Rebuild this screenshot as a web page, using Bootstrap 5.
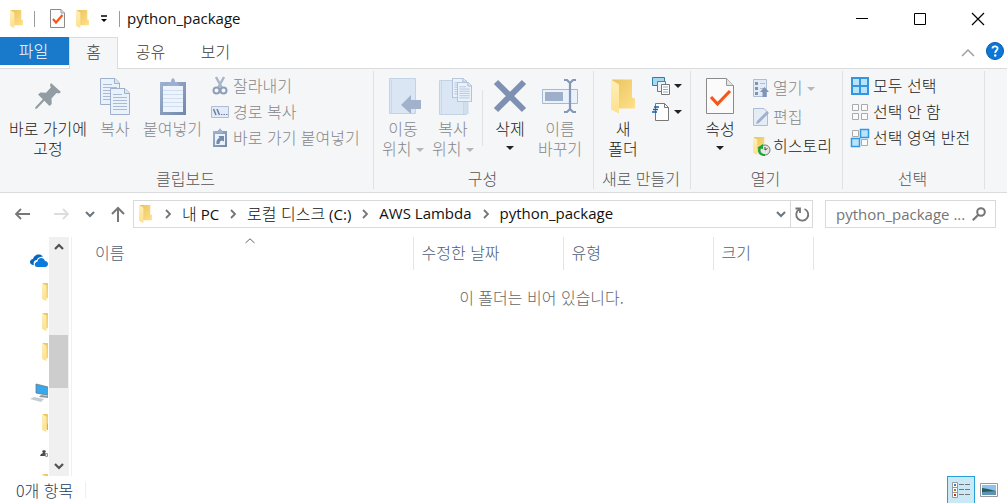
<!DOCTYPE html>
<html lang="ko">
<head>
<meta charset="utf-8">
<meta name="viewport" content="width=device-width, initial-scale=1">
<title>python_package</title>
<link href="https://cdn.jsdelivr.net/npm/bootstrap@5.3.0/dist/css/bootstrap.min.css" rel="stylesheet">
<style>
  body { font: 300 16px/20px "Noto Sans CJK KR", sans-serif; color: #222; background: #fff; }
  button, input { font: inherit; color: inherit; }
  button { background: none; border: 0; padding: 0; }
  a { color: inherit; text-decoration: none; }
  svg { display: block; flex: none; overflow: visible; }
  .latin { font-family: "Open Sans", "Noto Sans CJK KR", sans-serif; font-size: 15px; font-weight: 400; }
  .hangul { font: 300 16px/20px "Noto Sans CJK KR", sans-serif; }
  .title-row { height: 37px; padding-left: 10px; gap: 11px; color: #111; }
  .title-row .latin { margin-left: -4px; padding-bottom: 2px; }
  .bar { width: 1px; height: 16px; background: #9b9b9b; }
  .win { width: 58px; height: 37px; display: grid; place-items: center; }
  .tabs-row { height: 32px; margin-bottom: -1px; }
  .tab { display: flex; justify-content: center; width: 65px; height: 32px; padding-top: 3px; color: #3b3b3b; border: 1px solid transparent; border-bottom: 0; }
  .tab.file { width: 69px; height: 28px; background: #1979ca; color: #fff; padding: 2px 2px 0 0; }
  .tab.home { width: 49px; background: #f5f6f7; border-color: #dadbdc; }
  .help { margin: 0 3px 0 12px; }
  .ribbon { height: 125px; background: #f5f6f7; border-top: 1px solid #dadbdc; border-bottom: 1px solid #dadbdc; }
  .group { position: relative; display: flex; flex-direction: column; height: 123px; padding-bottom: 4px; flex: none; }
  .group::after { content: ""; position: absolute; right: 0; top: 2px; bottom: 3px; width: 1px; background: #dfe1e3; }
  .g-clip { width: 374px; } .g-org { width: 220px; } .g-new { width: 97px; } .g-open { width: 152px; } .g-sel { width: 142px; }
  .group-name { margin-top: auto; padding-right: 3px; text-align: center; color: #555; }
  .inset { padding-left: 4px; }
  .big { display: flex; flex-direction: column; align-items: center; width: 50px; padding-top: 7px; word-break: keep-all; flex: none; }
  .big .pic { height: 40px; margin-bottom: 2px; display: grid; place-items: center; }
  .w-pin { width: 96px; } .w-copy { width: 38px; } .w-paste { width: 77px; }
  .stack { padding-top: 4px; }
  .stack .line { display: flex; align-items: center; height: 26px; gap: 4px; white-space: nowrap; }
  .stack .line span { padding-bottom: 2px; }
  .stack.tall .line { height: 29px; }
  button:disabled { color: #87878a; }
  .caret { width: 0; height: 0; border: 4px solid transparent; border-top-color: currentColor; border-bottom: 0; display: inline-block; vertical-align: 3px; }
  button:disabled .caret { border-top-color: #b5b7b9; }
  .split { width: 1px; height: 56px; background: #dfe1e3; margin: 21px 2px 0 4px; }
  .address-row { height: 44px; padding: 7px 11px 9px 0; gap: 12px; color: #111; }
  .address { flex: 1; min-width: 0; }
  .navs { width: 133px; padding-left: 15px; }
  .path, .find { border: 1px solid #d9d9d9; height: 28px; }
  .crumb { gap: 10px; padding-left: 5px; }
  .crumb a { padding-bottom: 2px; }
  .crumb svg:first-child { margin-right: 2px; }
  .find { width: 171px; padding: 0 9px 0 10px; }
  .find input { border: 0; outline: 0; padding: 0; min-width: 0; width: 134px; background: none; }
  .find input::placeholder { color: #767676; opacity: 1; }
  .refresh { width: 22px; height: 26px; border-left: 1px solid #d9d9d9; display: grid; place-items: center; }
  .tree { width: 48px; overflow: hidden; padding-top: 10px; }
  .tree a { display: flex; align-items: center; height: 30px; padding-left: 42px; flex: none; }
  .tree a.root { padding-left: 30px; }
  .tree .gap-top { margin-top: 11px; }
  .scroller { width: 20px; margin-left: 1px; background: #f0f0f0; flex: none; }
  .scroller button { height: 20px; width: 20px; display: grid; place-items: center; }
  .thumb { height: 53px; width: 19px; background: #cdcdcd; }
  .above { flex-grow: 78; } .below { flex-grow: 68; }
  .files { margin-left: 2px; border-left: 1px solid #f0f0f0; min-width: 0; }
  .files table { margin-left: 15px; table-layout: fixed; width: 726px; }
  .c-name { width: 326px; } .c-mid { width: 150px; } .c-size { width: 100px; }
  .files th { position: relative; height: 33px; padding: 0 8px 3px; border-right: 1px solid #e5e5e5; font-weight: inherit; color: #4c607a; }
  .sort { position: absolute; left: 50%; top: 1px; margin-left: -5px; }
  .empty { color: #666; padding: 17px 0 0 4px; }
  .status { height: 27px; gap: 12px; padding: 0 9px 0 16px; color: #1e395b; }
  .status .bar { background: #eee; }
  .view { height: 27px; display: grid; place-items: center; }
  .view.on { width: 28px; margin-right: 5px; background: #cbe8f6; border: 1px solid #26a0da; border-bottom: 0; }
</style>
</head>
<body>
<svg width="0" height="0" class="position-absolute" aria-hidden="true">
  <defs>
    <linearGradient id="gold" x1="0" x2="1" y1="0" y2="1"><stop offset="0" stop-color="#e9c35d"/><stop offset="1" stop-color="#ffe08b"/></linearGradient>
    <linearGradient id="leaf" x1="0" x2="0" y1="0" y2="1"><stop offset="0" stop-color="#ffefb8"/><stop offset="1" stop-color="#fde08c"/></linearGradient>
    <linearGradient id="steel" x1="0" x2="1" y1="0" y2="1"><stop offset="0" stop-color="#9fb3d0"/><stop offset="1" stop-color="#7187ac"/></linearGradient>
    <symbol id="folder" viewBox="0 0 24 34"><path d="M1 0H21V18L24 19V29H1Z" fill="url(#gold)"/><path d="M0 0L8 5V34L0 30Z" fill="url(#leaf)"/></symbol>
    <symbol id="page" viewBox="0 0 20 27"><path d="M.5.5H15L19.5 5V26.500H.5Z" fill="#e9f1fb" stroke="#9fb0cc"/><path d="M14.500.5V5.500H19.500" fill="#dbe6f5" stroke="#9fb0cc"/><path d="M3 6.500H12M3 9.500H17M3 12.500H17M3 15.500H17M3 18.500H17M3 21.500H17" stroke="#a9bad4"/></symbol>
    <symbol id="check" viewBox="0 0 28 36"><path d="M.5.5H20.500L27.500 7.500V35.500H.5Z" fill="#fbfbfc" stroke="#8b8b8b"/><path d="M20.500.5V7.500H27.500" fill="#e3e3e3" stroke="#9a9a9a"/><path d="M5 19L11.500 26L24 13" fill="none" stroke="#f2571c" stroke-width="3.200"/></symbol>
    <symbol id="chev" viewBox="0 0 8 10"><path d="M2 1L6 5L2 9" fill="none" stroke="#757575" stroke-width="1.800"/></symbol>
    <symbol id="down" viewBox="0 0 10 10"><path d="M1 3L5 7L9 3" fill="none" stroke="currentColor" stroke-width="2"/></symbol>
  </defs>
</svg>
<div class="d-flex flex-column vh-100 overflow-hidden">
  <header>
    <div class="title-row d-flex align-items-center">
      <svg width="13" height="18"><use href="#folder"/></svg>
      <span class="bar me-1"></span>
      <button aria-label="속성"><svg width="15" height="19" viewBox="0 0 15 19"><path d="M.5.5H11L14.500 4V18.500H.5Z" fill="#fbfbfc" stroke="#8b8b8b"/><path d="M11 .5V4H14.500" fill="#e3e3e3" stroke="#9a9a9a"/><path d="M3 10L6 13.500L12.500 6" fill="none" stroke="#f2571c" stroke-width="2.200"/></svg></button>
      <button aria-label="새 폴더"><svg width="13" height="18"><use href="#folder"/></svg></button>
      <button aria-label="사용자 지정"><svg width="8" height="8" viewBox="0 0 8 8"><path d="M1 1H7" stroke="#000" stroke-width="1.500"/><path d="M1 4H7L4 7Z"/></svg></button>
      <span class="bar"></span>
      <span class="latin flex-fill">python_package</span>
      <div class="d-flex">
        <button class="win" aria-label="최소화"><svg width="12" height="12"><path d="M0 5.500H12" stroke="#000"/></svg></button>
        <button class="win" aria-label="최대화"><svg width="12" height="12"><path d="M.5.5H11.500V11.500H.5Z" fill="none" stroke="#000"/></svg></button>
        <button class="win" aria-label="닫기"><svg width="12" height="12"><path d="M0 0L12 12M12 0L0 12" stroke="#000" stroke-width="1.200"/></svg></button>
      </div>
    </div>
    <nav class="tabs-row d-flex align-items-start position-relative">
      <a href="#" class="tab file">파일</a><a href="#" class="tab home">홈</a><a href="#" class="tab">공유</a><a href="#" class="tab">보기</a>
      <button class="ms-auto align-self-center" aria-label="리본 최소화"><svg width="12" height="8"><path d="M0 7L6 1L12 7" fill="none" stroke="#a0a0a0" stroke-width="1.500"/></svg></button>
      <button class="help align-self-center pb-1" aria-label="도움말"><svg width="18" height="18"><circle cx="9" cy="9" r="8.500" fill="#0b78d8" stroke="#075ba8"/><path d="M6.500 6.500C6.500 3.500 11.700 3.600 11.600 6.500C11.500 8.300 9.300 8.500 9.200 11" fill="none" stroke="#fff" stroke-width="1.800"/><circle cx="9.200" cy="13.500" r="1.200" fill="#fff"/></svg></button>
    </nav>
  </header>

  <section class="ribbon d-flex">
    <div class="group g-clip">
      <div class="d-flex">
        <button class="big w-pin"><span class="pic"><svg width="26" height="26"><path d="M16 0L26 9L24 10.500L21.500 10L16.500 15.500L16.700 21L14.500 23L9.300 17.800L2 25.500L0 26L.5 24L7.800 16.300L3 11.500L5.500 9.500L11 9.800L15.800 4.600L15 2Z" fill="#929ca3"/></svg></span><span>바로 가기에 고정</span></button>
        <button class="big w-copy" disabled><span class="pic"><svg width="30" height="37"><use href="#page" width="20" height="27"/><use href="#page" x="10" y="10" width="20" height="27"/></svg></span><span>복사</span></button>
        <button class="big w-paste" disabled><span class="pic"><svg width="28" height="37"><path d="M1 4H27V37H1Z" fill="url(#steel)"/><path d="M4 8H24V34H4Z" fill="#edf4fd"/><path d="M4 12.500H24M4 16.500H24M4 20.500H24M4 24.500H24M4 28.500H24" stroke="#d0def0"/><path d="M7 8L10 4H12C12-1 16-1 16 4H18L21 8Z" fill="#9db0ce"/></svg></span><span>붙여넣기</span></button>
        <div class="stack">
          <button class="line" disabled><svg width="18" height="18" fill="none" stroke="#8f9eb9"><path d="M5 0L11 11M13 0L7 11" stroke-width="2.500" stroke="#a9b7cc"/><circle cx="5.500" cy="13.500" r="3" stroke-width="2"/><circle cx="12.500" cy="13.500" r="3" stroke-width="2"/></svg><span>잘라내기</span></button>
          <button class="line" disabled><svg width="18" height="12"><path d="M.5.5H17.500V11.500H.5Z" fill="#e2ebf7" stroke="#adbdd6"/><path d="M2.500 3L5 9M6 3L8.500 9" stroke="#6d7f9c" stroke-width="1.500"/><path d="M10 8.500H11.500M12.500 8.500H14M15 8.500H16.500" stroke="#6d7f9c"/></svg><span>경로 복사</span></button>
          <button class="line" disabled><svg width="18" height="18"><path d="M2 2H16V18H2Z" fill="url(#steel)"/><path d="M4 5H14V16H4Z" fill="#eaf2fc"/><path d="M6 4L7 1H8C8-1 10-1 10 1H11L12 4Z" fill="#9db0ce"/><path d="M5.500 15C5 11 7 9.500 8.500 9L7.500 7H13V12.500L11 11.500C8.500 12 8.500 13.500 8.500 15Z" fill="#7488ac"/></svg><span>바로 가기 붙여넣기</span></button>
        </div>
      </div>
      <div class="group-name">클립보드</div>
    </div>

    <div class="group g-org">
      <div class="d-flex inset">
        <button class="big" disabled><span class="pic"><svg width="32" height="36" class="ms-1"><path d="M.5.5H26.500V35.500H.5Z" fill="#dbe6f4" stroke="#c4d2e6"/><path d="M2.500 2V35" stroke="#c9d7ea"/><path d="M12 27L22 17V22H32V31H22V36Z" fill="#a2b2cd"/></svg></span><span>이동 위치 <i class="caret"></i></span></button>
        <button class="big" disabled><span class="pic"><svg width="33" height="37" class="ms-1"><path d="M.5 2.500H27.500V36.500H.5Z" fill="#dbe6f4" stroke="#c4d2e6"/><path d="M2.500 3V36M24.500 36V25C25 22 29 22 29 26V36" fill="#d3deed" stroke="#c9d7ea"/><use href="#page" x="13" width="15" height="20"/><use href="#page" x="18" y="4" width="15" height="20"/></svg></span><span>복사 위치 <i class="caret"></i></span></button>
        <span class="split"></span>
        <button class="big"><span class="pic"><svg width="32" height="32"><path d="M2 2L30 30M30 2L2 30" stroke="#7f91b2" stroke-width="6"/></svg></span><span>삭제</span><i class="caret mt-2"></i></button>
        <button class="big" disabled><span class="pic"><svg width="36" height="34"><path d="M.5 10.500H35.500V24.500H.5Z" fill="#e9f1fb" stroke="#a8b8d2"/><path d="M3 13H21V22H3Z" fill="#9eafcc"/><path d="M22 1H25L28 4L31 1H34M28 3V31M22 33H25L28 30L31 33H34" fill="none" stroke="#8497b8" stroke-width="2.200"/></svg></span><span>이름 바꾸기</span></button>
      </div>
      <div class="group-name">구성</div>
    </div>

    <div class="group g-new">
      <div class="d-flex inset">
        <button class="big"><span class="pic"><svg width="24" height="35"><use href="#folder"/></svg></span><span class="px-2">새 폴더</span></button>
        <div class="stack">
          <button class="line ms-1" aria-label="새 항목"><svg width="18" height="18"><path d="M.5.5H12.500V8.500H.5Z" fill="#a7d8f1" stroke="#307cab"/><path d="M5.500 4.500H13.500V14.500H5.500Z" fill="#eef3f8" stroke="#777"/><path d="M9.500 7.500H17.500V17.500H9.500Z" fill="#fff" stroke="#777"/><path d="M11 10H16M11 12.500H16M11 15H16" stroke="#8eabd0"/></svg><i class="caret"></i></button>
          <button class="line ms-1" aria-label="빠른 연결"><svg width="18" height="18"><path d="M3.500.5H12.500L16.500 4.500V17.500H3.500Z" fill="#fff" stroke="#777"/><path d="M12.500.5V4.500H16.500" fill="none" stroke="#777"/><path d="M2 4H7M1 6.500H6M0 9H5" stroke="#1260b0" stroke-width="1.300"/></svg><i class="caret"></i></button>
        </div>
      </div>
      <div class="group-name">새로 만들기</div>
    </div>

    <div class="group g-open">
      <div class="d-flex inset">
        <button class="big"><span class="pic"><svg width="28" height="36"><use href="#check"/></svg></span><span>속성</span><i class="caret mt-2"></i></button>
        <div class="stack tall ms-1 ps-1">
          <button class="line" disabled><svg width="16" height="18"><path d="M.5.5H13.500V17.500H.5Z" fill="#e3ebf6" stroke="#aebdd5"/><path d="M2 3H5V6H2ZM2 8H5V11H2ZM2 13H5V16H2Z" fill="#7f93b5"/><path d="M7 4.500H12M7 9.500H12" stroke="#aebdd5"/><path d="M11.500 8L16 13H13.500V18H9.500V13H7Z" fill="#8094b6"/></svg><span>열기 <i class="caret"></i></span></button>
          <button class="line" disabled><svg width="16" height="18"><path d="M.5.5H11L14.500 4V17.500H.5Z" fill="#e3ecf7" stroke="#aebdd5"/><path d="M3 16L4 13L14 3L16 5L6 15Z" fill="#a0b0cb"/></svg><span>편집</span></button>
          <button class="line"><svg width="16" height="18"><use href="#folder" width="13" height="18"/><circle cx="12" cy="13" r="5" fill="#e6e6e6" stroke="#777"/><path d="M12 10V13L14.500 11.500" fill="none" stroke="#444"/><path d="M12 18C6 18 5 14 7 10" fill="none" stroke="#19a832" stroke-width="2"/><path d="M4 11L10 7V12Z" fill="#19a832"/></svg><span>히스토리</span></button>
        </div>
      </div>
      <div class="group-name">열기</div>
    </div>

    <div class="group g-sel">
      <div class="stack ps-2">
        <button class="line"><svg width="18" height="18"><path d="M1 1H17V17H1ZM9 1V17M1 9H17" fill="#b9e3fb" stroke="#3297e0" stroke-width="2"/></svg><span>모두 선택</span></button>
        <button class="line"><svg width="18" height="18"><path d="M1.500 1.500H7.500V7.500H1.500ZM10.500 1.500H16.500V7.500H10.500ZM1.500 10.500H7.500V16.500H1.500ZM10.500 10.500H16.500V16.500H10.500Z" fill="#fafafa" stroke="#aaa"/></svg><span>선택 안 함</span></button>
        <button class="line"><svg width="18" height="18"><path d="M1.500 1.500H7.500V7.500H1.500ZM10.500 10.500H16.500V16.500H10.500Z" fill="#fafafa" stroke="#aaa"/><path d="M9.500 .5H17.500V8.500H9.500ZM.5 9.500H8.500V17.500H.5Z" fill="#b9e3fb" stroke="#3297e0" stroke-width="1.500"/></svg><span>선택 영역 반전</span></button>
      </div>
      <div class="group-name">선택</div>
    </div>
  </section>

  <div class="address-row d-flex">
    <div class="address d-flex">
      <div class="navs d-flex align-items-center flex-shrink-0">
        <button aria-label="뒤로"><svg width="15" height="12"><path d="M15 6H1M6 1L1 6L6 11" fill="none" stroke="#777" stroke-width="1.800"/></svg></button>
        <button class="ms-4" aria-label="앞으로" disabled><svg width="15" height="12"><path d="M0 6H14M9 1L14 6L9 11" fill="none" stroke="#ddd" stroke-width="1.800"/></svg></button>
        <button class="ms-3 text-secondary" aria-label="최근 위치"><svg width="10" height="10"><use href="#down"/></svg></button>
        <button class="ms-3" aria-label="위로"><svg width="14" height="15"><path d="M7 15V1M1 7L7 1L13 7" fill="none" stroke="#777" stroke-width="2"/></svg></button>
      </div>
      <div class="path d-flex align-items-center flex-fill">
        <nav class="crumb latin d-flex align-items-center flex-fill" aria-label="경로">
          <svg width="13" height="18"><use href="#folder"/></svg>
          <svg width="8" height="10"><use href="#chev"/></svg><a href="#"><span class="hangul">내</span> PC</a>
          <svg width="8" height="10"><use href="#chev"/></svg><a href="#"><span class="hangul">로컬 디스크</span> (C:)</a>
          <svg width="8" height="10"><use href="#chev"/></svg><a href="#">AWS Lambda</a>
          <svg width="8" height="10"><use href="#chev"/></svg><a href="#">python_package</a>
        </nav>
        <button class="me-1 text-secondary" aria-label="이전 위치"><svg width="10" height="10"><use href="#down"/></svg></button>
        <button class="refresh" aria-label="새로 고침"><svg width="14" height="14"><path d="M4 2.500A6 6 0 1 0 9.500 2M.5 1.500H5V6" fill="none" stroke="#757575" stroke-width="1.800"/></svg></button>
      </div>
    </div>
    <div class="find latin d-flex align-items-center">
      <input type="text" aria-label="검색" placeholder="python_package ...">
      <button class="ms-auto" aria-label="검색"><svg width="14" height="14"><circle cx="9" cy="5" r="3.800" fill="none" stroke="#757575" stroke-width="2"/><path d="M6.500 7.500L.8 13.200" stroke="#757575" stroke-width="2.200"/></svg></button>
    </div>
  </div>

  <main class="d-flex flex-fill overflow-hidden">
    <nav class="tree d-flex flex-column flex-shrink-0" aria-label="탐색 창">
      <a href="#" class="root pb-1" aria-label="OneDrive"><svg width="18" height="13"><path d="M3 11C-2 10 0 5 3 5C4 0 11-1 13 3C9 2 7 5 7 6C4 6 3 9 4 11Z" fill="#0a65c0"/><path d="M7 13C4 13 4 8 7.500 7.500C8 3 14 3 15 7C19 7 19 13 15 13Z" fill="#0a7bdb"/></svg></a>
      <a href="#" aria-label="폴더 1"><svg width="13" height="18"><use href="#folder"/></svg></a>
      <a href="#" aria-label="폴더 2"><svg width="13" height="18"><use href="#folder"/></svg></a>
      <a href="#" aria-label="폴더 3"><svg width="13" height="18"><use href="#folder"/></svg></a>
      <a href="#" class="root gap-top" aria-label="내 PC"><svg width="22" height="18"><path d="M6 0L22 4V12L6 9Z" fill="#35a8ee" stroke="#777" stroke-width=".8"/><path d="M11 11L18 12V14L9 13Z" fill="#8d99a3"/><path d="M4 13L14 15L11 18L0 15Z" fill="#c5ccd3"/></svg></a>
      <a href="#" aria-label="폴더 4"><svg width="13" height="18"><use href="#folder"/><path d="M5 10L7 8V16H5Z" fill="#63cde0"/></svg></a>
      <a href="#" aria-label="네트워크"><svg width="8" height="8"><path d="M-2 7L-1 5L1 4L0 2L2 1L4 2L3 4L6 7Z" fill="#4c4c4c"/><circle cx="4.500" cy="6" r="1.500" fill="#eee" stroke="#777"/></svg></a>
      <a href="#" aria-label="폴더 5"><svg width="13" height="18"><use href="#folder"/></svg></a>
    </nav>
    <div class="scroller d-flex flex-column">
      <button aria-label="위로 스크롤"><svg width="10" height="8"><path d="M1 6L5 2L9 6" fill="none" stroke="#505050" stroke-width="2.200"/></svg></button>
      <span class="above"></span><span class="thumb"></span><span class="below"></span>
      <button aria-label="아래로 스크롤"><svg width="10" height="8"><path d="M1 2L5 6L9 2" fill="none" stroke="#505050" stroke-width="2.200"/></svg></button>
    </div>
    <section class="files flex-fill">
      <table>
        <colgroup><col class="c-name"><col class="c-mid"><col class="c-mid"><col class="c-size"></colgroup>
        <thead><tr><th scope="col">이름<svg class="sort" width="10" height="6"><path d="M.5 5L5 .8L9.500 5" fill="none" stroke="#666"/></svg></th><th scope="col">수정한 날짜</th><th scope="col">유형</th><th scope="col">크기</th></tr></thead>
      </table>
      <p class="empty text-center mb-0">이 폴더는 비어 있습니다.</p>
    </section>
  </main>

  <footer class="status d-flex align-items-center">
    <span>0개 항목</span><span class="bar"></span>
    <div class="d-flex ms-auto">
      <button class="view on" aria-label="자세히"><svg width="18" height="16"><path d="M.5.5H5.500V15.500H.5ZM.5 5.500H5.500M.5 10.500H5.500" fill="#fff" stroke="#999"/><path d="M2 2H4V4H2Z" fill="#2e7ec0"/><path d="M2 7H4V9H2Z" fill="#8a8a22"/><path d="M2 12H4V14H2Z" fill="#c2331e"/><path d="M7 2.500H12M13 2.500H18M7 7.500H12M13 7.500H18M7 12.500H12M13 12.500H18" stroke="#777"/></svg></button>
      <button class="view" aria-label="큰 아이콘"><svg width="18" height="14"><path d="M.5.5H17.500V13.500H.5Z" fill="#fff" stroke="#999"/><path d="M2 2H16V12H2Z" fill="#8dc2ee"/><path d="M2 5L8 6L16 8V10H2Z" fill="#285c55"/><path d="M2 9L16 8V12H2Z" fill="#5d93b5"/></svg></button>
    </div>
  </footer>
</div>
<script src="https://cdn.jsdelivr.net/npm/bootstrap@5.3.0/dist/js/bootstrap.bundle.min.js"></script>
</body>
</html>
